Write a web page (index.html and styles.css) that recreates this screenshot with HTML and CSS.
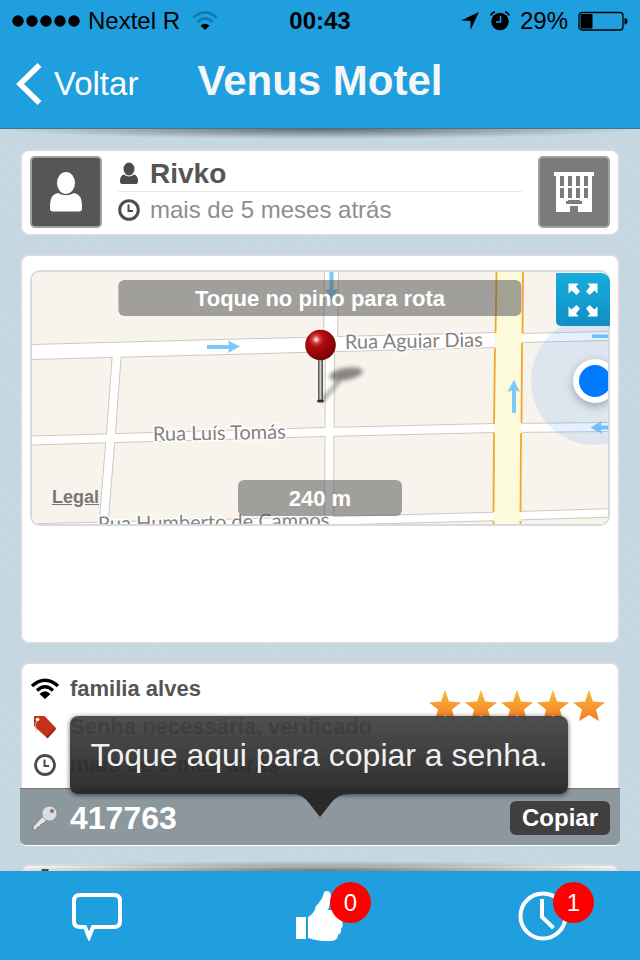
FILE: index.html
```html
<!DOCTYPE html>
<html lang="pt-BR">
<head>
    <meta charset="UTF-8">
    <meta name="viewport" content="width=device-width, initial-scale=1.0">
    <title>Venus Motel</title>
    <link rel="stylesheet" href="styles.css">
</head>
<body>
  <header class="top">
    <div class="status-bar">
        <div class="status-left">
            <svg width="68" height="12" viewBox="0 0 68 12">
                <circle cx="6" cy="6" r="5.7"/><circle cx="20" cy="6" r="5.7"/><circle cx="34" cy="6" r="5.7"/><circle cx="48" cy="6" r="5.7"/><circle cx="62" cy="6" r="5.7"/>
            </svg>
            <span>Nextel R</span>
            <svg width="26" height="20" viewBox="0 0 26 20" fill="none">
                <path d="M1.5 6.5Q13-3.5 24.5 6.5" stroke="#1377a8" stroke-width="2.6"/>
                <path d="M5.5 11Q13 4 20.5 11" stroke="#1377a8" stroke-width="2.6"/>
                <path d="M8.5 14.5Q13 11 17.500 14.500L13 19z" fill="#000"/>
            </svg>
        </div>
        <strong class="clock">00:43</strong>
        <div class="status-right">
            <svg width="20" height="20" viewBox="0 0 20 20"><path d="M19 1L10.5 19V10L1 9.5z"/></svg>
            <svg width="20" height="20" viewBox="0 0 20 20">
                <circle cx="10" cy="10.5" r="8.7"/>
                <path d="M0.8 4.5Q2 1.5 5 .9M19.2 4.5Q18 1.5 15 .9" fill="none" stroke="#000" stroke-width="1.6"/>
                <path d="M10.5 5v6H6" fill="none" stroke="#1f9fdd" stroke-width="1.5"/>
            </svg>
            <span>29%</span>
            <svg width="50" height="20" viewBox="0 0 50 20">
                <rect x="1" y="1.5" width="44" height="17.5" rx="3" fill="none" stroke="#000" stroke-width="1.3"/>
                <rect x="2.5" y="3" width="12" height="14.5" rx="1"/>
                <path d="M46.500 7q3 .5 3 3.300t-3 3.300z"/>
            </svg>
        </div>
    </div>
    <nav class="nav-bar">
        <a class="back" href="#">
            <svg width="26" height="42" viewBox="0 0 26 42"><path d="M23.500 2L4 21L23.500 40" fill="none" stroke="#fff" stroke-width="5.5"/></svg>
            <span>Voltar</span>
        </a>
        <h1>Venus Motel</h1>
    </nav>
  </header>

  <main>
    <section class="card user-card">
        <div class="avatar">
            <svg width="34" height="42" viewBox="0 0 34 42" fill="#fff">
                <ellipse cx="17" cy="12" rx="9" ry="11"/>
                <path d="M9 22q8 4.500 16 0q8 1.500 8 12v4q0 2-3 2.500H4Q1 40 1 38v-4Q1 23.500 9 22z"/>
            </svg>
        </div>
        <div class="user-info">
            <div class="user-name">
                <svg width="22" height="24" viewBox="0 0 22 24" fill="#4c4c4c">
                    <ellipse cx="11" cy="7" rx="5.5" ry="6.5"/>
                    <path d="M6 12.500q5 4 10 0q4 1 4 6.500q0 3-2 3H4q-2 0-2-3q0-5.500 4-6.500z"/>
                </svg>
                <h2>Rivko</h2>
            </div>
            <div class="user-time">
                <svg width="22" height="22" viewBox="0 0 22 22" fill="none" stroke="#4c4c4c">
                    <circle cx="11" cy="11" r="9.3" stroke-width="3"/><path d="M10.5 5.5V12H15" stroke-width="2"/>
                </svg>
                <span>mais de 5 meses atrás</span>
            </div>
        </div>
        <div class="avatar place">
            <svg width="40" height="40" viewBox="0 0 40 40">
                <path d="M0 0H40V4H38V40H24V34H16V40H2V4H0z" fill="#fff"/>
                <path d="M6 4h4v10H6zM14 4h4v10h-4zM22 4h4v10h-4zM30 4h4v10h-4zM6 16h4v10H6zM14 16h4v10h-4zM22 16h4v10h-4zM30 16h4v10h-4zM12 29h2v-1h12v1h2v3H12z" fill="#7b7b7b"/>
            </svg>
        </div>
    </section>

    <section class="card map-card">
      <div class="map-frame">
        <div class="map">
            <svg class="map-tiles" viewBox="0 0 576 252" preserveAspectRatio="xMidYMid slice">
                <defs>
                    <radialGradient id="pinHead" cx=".36" cy=".32" r=".7">
                        <stop offset="0" stop-color="#fff"/><stop offset=".18" stop-color="#d04040"/><stop offset=".35" stop-color="#b00c10"/><stop offset="1" stop-color="#7a0005"/>
                    </radialGradient>
                    <linearGradient id="needle">
                        <stop offset="0" stop-color="#444"/><stop offset=".5" stop-color="#ccc"/><stop offset="1" stop-color="#333"/>
                    </linearGradient>
                    <filter id="soft" x="-50%" y="-50%" width="200%" height="200%"><feGaussianBlur stdDeviation="2"/></filter>
                    <filter id="dotShadow" x="-50%" y="-50%" width="200%" height="200%"><feGaussianBlur stdDeviation="5"/></filter>
                </defs>
                <rect width="576" height="252" fill="#f8f4ed"/>
                <!-- streets: outline first, white on top -->
                <g fill="none" stroke="#cfc8c0">
                    <path d="M0 80L305 72L463 68" stroke-width="16"/>
                    <path d="M489 66L576 64" stroke-width="10"/>
                    <path d="M0 168.5L293 160L462 156L576 155" stroke-width="10"/>
                    <path d="M0 256L293 249L462 244.5L576 241" stroke-width="9.5"/>
                    <path d="M85 80L79 161L71.5 252" stroke-width="10"/>
                    <path d="M299.5 0L298.5 72" stroke-width="15"/>
                    <path d="M298 72L297 252" stroke-width="10"/>
                </g>
                <g fill="none" stroke="#fff">
                    <path d="M0 80L305 72L463 68" stroke-width="14"/>
                    <path d="M489 66L576 64" stroke-width="8"/>
                    <path d="M0 168.5L293 160L462 156L576 155" stroke-width="8"/>
                    <path d="M0 256L293 249L462 244.5L576 241" stroke-width="7.5"/>
                    <path d="M85 80L79 161L71.5 252" stroke-width="8"/>
                    <path d="M299.5 0L298.5 72" stroke-width="13"/>
                    <path d="M298 72L297 252" stroke-width="8"/>
                </g>
                <path d="M464 0H491L489 252H461.5z" fill="#fbfadb"/>
                <path d="M464.5 0L463.5 61M463 76L462 152M462 161L461.5 240M461.5 249V252M491 0L490.5 61M490 71L489.5 151M489 161L488.5 240M488.5 249V252" stroke="#f3a62f" stroke-width="1.8"/>
                <g fill="#7cc8fa">
                    <path d="M175 73H197L196 68.500L208 74.500L196 81L197 77H175z"/>
                    <path d="M297.500 0V18L293 17L299.500 29L306 17L301.500 18V0z"/>
                    <path d="M480 141V118.500L475.500 120L482 108L488 120L484 118.500V141z"/>
                    <path d="M576 153.500H569L570 149L558.500 155.500L570 162L569 157.500H576z"/>
                    <path d="M560 62.500H576V66H560z"/>
                </g>
                <g class="street">
                    <text x="313" y="77" transform="rotate(-1 313 77)">Rua Aguiar Dias</text>
                    <text x="121" y="169" transform="rotate(-1 121 169)">Rua Luís Tomás</text>
                    <text x="66" y="259" transform="rotate(-1 66 259)">Rua Humberto de Campos</text>
                </g>
                <circle cx="563" cy="109" r="64" fill="#3c96ff" fill-opacity=".14"/>
                <circle cx="563" cy="112" r="22" fill="#000" fill-opacity=".3" filter="url(#dotShadow)"/>
                <circle cx="563" cy="109" r="22" fill="#fff"/>
                <circle cx="563" cy="109" r="16" fill="#007aff"/>
                <g filter="url(#soft)" opacity=".45">
                    <ellipse cx="314" cy="102" rx="17" ry="6" transform="rotate(-10 314 102)"/>
                    <path d="M290 129L308 108" stroke="#000" stroke-width="3"/>
                </g>
                <rect x="286" y="84" width="5" height="45" fill="url(#needle)"/>
                <ellipse cx="288.5" cy="129" rx="3.5" ry="1.5" fill="#333"/>
                <circle cx="288.5" cy="73" r="15.3" fill="url(#pinHead)"/>
            </svg>
            <div class="map-label hint">Toque no pino para rota</div>
            <div class="map-label distance">240 m</div>
            <a class="legal" href="#">Legal</a>
        </div>
        <button class="expand" aria-label="Expandir mapa">
            <svg width="30" height="34" viewBox="0 0 30 34" fill="#fff">
                <path d="M.5 .5H10.500L8 3.500L12 8.500L8.500 12L3.500 7.500L.5 10.500z"/>
                <path d="M29.500 .5H19.500L22 3.500L18 8.500L21.500 12L26.500 7.500L29.500 10.500z"/>
                <path d="M.5 33.500H10.500L8 30.500L12 25.500L8.500 22L3.500 26.500L.5 23.500z"/>
                <path d="M29.500 33.500H19.500L22 30.500L18 25.500L21.500 22L26.500 26.500L29.500 23.500z"/>
            </svg>
        </button>
      </div>
    </section>

    <section class="card wifi-card">
        <div class="wifi-body">
            <ul class="wifi-info">
                <li>
                    <svg width="30" height="22" viewBox="0 0 30 22" fill="none" stroke="#000">
                        <path d="M2 8Q15-3.500 28 8" stroke-width="3.4"/><path d="M7 12.500Q15 5 23 12.500" stroke-width="3.2"/>
                        <path d="M9.500 16Q15 10.500 20.500 16L15 21z" fill="#000" stroke="none"/>
                    </svg>
                    familia alves
                </li>
                <li>
                    <svg width="30" height="24" viewBox="0 0 30 24">
                        <path d="M4 1H14.500L25.500 12.500V14L18 22.500L16.500 22.500L4 11z" fill="#c13219"/>
                        <path d="M17 23L25.500 13.500" stroke="#8f2110" stroke-width="1.5"/>
                        <circle cx="7.5" cy="4.5" r="1.8" fill="#fff"/><path d="M7 5Q4 10 6.500 16" fill="none" stroke="#bbb"/>
                    </svg>
                    Senha necessária, verificado
                </li>
                <li>
                    <svg width="30" height="22" viewBox="0 0 30 22" fill="none" stroke="#4c4c4c">
                        <circle cx="15" cy="11" r="9.5" stroke-width="2.8"/><path d="M14.5 5.5V12H19" stroke-width="2"/>
                    </svg>
                    mais de 1 mês atrás
                </li>
            </ul>
            <svg class="stars" width="176" height="32" viewBox="0 0 176 32" role="img" aria-label="5 estrelas">
                <defs>
                    <linearGradient id="gold" x2="0" y2="1"><stop offset="0" stop-color="#f8bb3c"/><stop offset="1" stop-color="#f87a22"/></linearGradient>
                    <path id="star" d="M16 0L20 11.500L32 12.500L23 19.500L26 31L16 25L6 31L9 19.500L0 12.500L12 11.500z" fill="url(#gold)"/>
                </defs>
                <use href="#star"/><use href="#star" x="36"/><use href="#star" x="72"/><use href="#star" x="108"/><use href="#star" x="144"/>
            </svg>
        </div>
        <div class="password">
            <svg width="26" height="26" viewBox="0 0 26 26">
                <path d="M12 10L1 22L1.500 25L4 24.500L5.500 22L8 21.500L9 19L11 18.500L16 14z" fill="#e6e6e6" stroke="#6d6d6d" stroke-width=".6"/>
                <circle cx="17.5" cy="8.5" r="7.5" fill="#ddd" stroke="#777" stroke-width=".6"/>
                <circle cx="20" cy="6" r="2" fill="#777"/>
            </svg>
            <strong>417763</strong>
            <button class="copy">Copiar</button>
        </div>
        <div class="tooltip" role="tooltip">
            Toque aqui para copiar a senha.
            <svg class="tip" width="60" height="24" viewBox="0 0 60 24"><path d="M0 0H60Q49 0 42 9L31 23L20 9Q13 0 4 0z" fill="#292929"/></svg>
        </div>
    </section>

    <section class="card next-card">
        <svg width="30" height="22" viewBox="0 0 30 22"><path d="M8 0H15L10 10H4z" fill="#4c4c4c"/></svg>
    </section>
  </main>

  <footer class="tab-bar">
    <button class="tab" aria-label="Comentários">
        <svg width="50" height="50" viewBox="0 0 50 50" fill="none" stroke="#fff" stroke-width="4">
            <path d="M8 4H42Q48 4 48 10V30Q48 36 42 36H21L17 46L13 36H8Q2 36 2 30V10Q2 4 8 4z"/>
        </svg>
    </button>
    <button class="tab" aria-label="Curtidas">
        <svg width="50" height="50" viewBox="0 0 50 50" fill="#fff">
            <path d="M1 26H11V48H1z"/>
            <path d="M13 26Q19 23 21 15Q28 8 29 1Q35-2 36 5Q36 11 33 19H44Q50 20 48 25Q50 28 47 31Q49 35 46 38Q47 42 43 44Q43 49 37 50H27Q19 49 13 47z"/>
        </svg>
        <span class="badge">0</span>
    </button>
    <button class="tab" aria-label="Histórico">
        <svg width="50" height="50" viewBox="0 0 50 50" fill="none" stroke="#fff" stroke-width="4">
            <circle cx="25" cy="25" r="22.5"/><path d="M24 8V26L35.500 37"/>
        </svg>
        <span class="badge">1</span>
    </button>
  </footer>
</body>
</html>
```
FILE: styles.css
```css
*{
    box-sizing: border-box;
}

body{
    margin: 0;
    height: 100vh;
    display: flex;
    flex-direction: column;
    font-family: "Liberation Sans", Arial, Helvetica, sans-serif;
    background-color: #c6d7e1;
    color: #555;
}

h1, h2, ul{
    margin: 0;
    padding: 0;
}

svg{
    display: block;
    flex: none;
}

button{
    font-family: inherit;
    border: none;
    padding: 0;
    cursor: pointer;
}

/* header */
.top{
    flex: none;
    height: 129px;
    background-color: #1f9fdd;
    border-bottom: 1px solid #3d7595;
}

.status-bar{
    display: grid;
    grid-template-columns: 1fr auto 1fr;
    align-items: center;
    height: 42px;
    padding: 0 12px;
    color: #000;
    font-size: 24px;
}

.status-left, .status-right{
    display: flex;
    align-items: center;
    gap: 8px;
}

.status-left svg:last-child{
    margin-left: 4px;
}

.status-right{
    justify-content: flex-end;
    gap: 10px;
}

.nav-bar{
    display: grid;
    grid-template-columns: 1fr auto 1fr;
    align-items: center;
    height: 84px;
    padding: 0 16px;
}

.back{
    display: flex;
    align-items: center;
    gap: 12px;
    color: #fff;
    font-size: 33px;
    text-decoration: none;
}

.nav-bar h1{
    color: #f4f6f8;
    font-size: 42px;
    line-height: 48px;
    padding-bottom: 6px;
}

/* content */
main{
    flex: 1;
    min-height: 0;
    position: relative;
    overflow: hidden;
    padding: 20px;
    display: flex;
    flex-direction: column;
    gap: 18px;
    background: repeating-linear-gradient(45deg, #c4d6e0 0 2px, #c9d9e3 2px 4px);
}

main::before, main::after{
    content: "";
    position: absolute;
    left: 0;
    right: 0;
    height: 10px;
}

main::before{
    top: 0;
    background: radial-gradient(50% 100% at 50% 0, rgba(0,0,0,0.5), transparent);
}

main::after{
    bottom: 0;
    background: radial-gradient(50% 100% at 50% 100%, rgba(0,0,0,0.5), transparent);
}

.card{
    flex: none;
    background: #fff;
    border: 2px solid #d9dadd;
    border-radius: 9px;
}

.user-card{
    display: flex;
    gap: 16px;
    height: 87px;
    padding: 5px 8px;
}

.avatar{
    flex: none;
    display: flex;
    align-items: center;
    justify-content: center;
    width: 72px;
    height: 72px;
    background-color: #565656;
    border: 2px solid #a0a0a0;
    border-radius: 5px;
}

.place{
    background-color: #7b7b7b;
}

.user-info{
    flex: 1;
}

.user-name, .user-time{
    display: flex;
    align-items: center;
    gap: 10px;
    height: 36px;
}

.user-name{
    border-bottom: 1px solid #e6e6e6;
}

.user-name h2{
    font-size: 28px;
}

.user-time{
    color: #8e8e8e;
    font-size: 24px;
}

/* map */
.map-card{
    height: 390px;
    padding: 14px 8px;
}

.map-frame{
    position: relative;
}

.map{
    position: relative;
    height: 256px;
    border: 2px solid #d9dadd;
    border-radius: 10px;
    overflow: hidden;
}

.map-tiles{
    width: 100%;
    height: 100%;
}

.street{
    font-family: Lato, sans-serif;
    font-size: 20px;
    fill: #85827f;
    stroke: #fff;
    stroke-width: 3px;
    paint-order: stroke;
}

.map-label{
    position: absolute;
    left: 50%;
    transform: translateX(-50%);
    height: 36px;
    line-height: 38px;
    border-radius: 6px;
    background-color: rgba(80,80,80,0.52);
    color: #fff;
    font-size: 22px;
    font-weight: bold;
    text-align: center;
}

.hint{
    top: 8px;
    width: 70%;
}

.distance{
    bottom: 8px;
    width: 164px;
}

.legal{
    position: absolute;
    left: 20px;
    bottom: 16px;
    color: #777;
    font-size: 18px;
    font-weight: bold;
}

.expand{
    position: absolute;
    top: 3px;
    right: 0;
    display: flex;
    align-items: center;
    justify-content: center;
    width: 54px;
    height: 53px;
    border-radius: 0 9px 0 5px;
    background: linear-gradient(#16addd, #128ec4);
}

/* wifi */
.wifi-card{
    position: relative;
}

.wifi-body{
    display: flex;
    justify-content: space-between;
    padding: 6px 13px 4px 8px;
}

.wifi-info{
    list-style: none;
    font-size: 22px;
    font-weight: bold;
}

.wifi-info li{
    display: flex;
    align-items: center;
    gap: 10px;
    height: 38px;
}

.stars{
    margin-top: 20px;
}

.password{
    display: flex;
    align-items: center;
    gap: 12px;
    height: 58px;
    margin: 0 -2px -2px;
    padding: 2px 10px 0 12px;
    background-color: #8c979e;
    border-top: 1px solid #6c757a;
    border-bottom: 1px solid #fff;
    border-radius: 0 0 6px 6px;
}

.password strong{
    flex: 1;
    color: #fff;
    font-size: 32px;
}

.copy{
    width: 100px;
    height: 34px;
    border-radius: 6px;
    background-color: #404040;
    color: #fff;
    font-size: 24px;
    font-weight: bold;
}

.tooltip{
    position: absolute;
    left: 48px;
    right: 50px;
    top: 52px;
    height: 78px;
    line-height: 78px;
    border-radius: 8px;
    background: linear-gradient(rgba(66,66,66,0.93), rgba(38,38,38,0.96));
    box-shadow: 0 1px 5px rgba(0,0,0,0.6);
    color: #f0f0f0;
    font-size: 32px;
    text-align: center;
    white-space: nowrap;
}

.tip{
    position: absolute;
    top: 100%;
    left: 50%;
    margin-left: -30px;
}

.next-card{
    height: 100px;
    padding: 3px 12px;
    background: linear-gradient(#f7f7f7, #ddd 10px);
}

/* bottom tabs */
.tab-bar{
    flex: none;
    display: flex;
    justify-content: space-between;
    align-items: center;
    height: 89px;
    padding: 0 72px;
    background-color: #1f9fdd;
}

.tab{
    position: relative;
    background: none;
}

.badge{
    position: absolute;
    left: 35px;
    top: -9px;
    width: 41px;
    height: 41px;
    line-height: 41px;
    border-radius: 50%;
    background-color: #f00;
    color: #fff;
    font-size: 24px;
    text-align: center;
}
```
